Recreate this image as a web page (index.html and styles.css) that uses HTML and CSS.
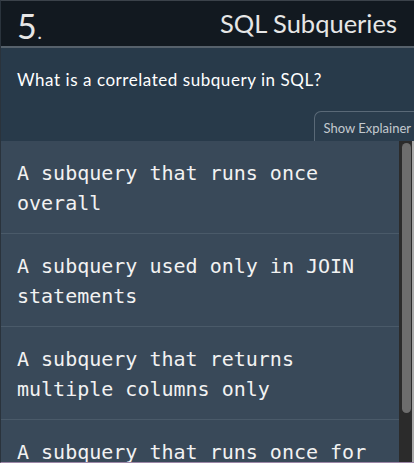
FILE: index.html
```html
<!DOCTYPE html>
<html lang="en">
<head>
<meta charset="utf-8">
<title>SQL Subqueries</title>
<link rel="stylesheet" href="styles.css">
</head>
<body>
<div class="app">
  <header class="topbar">
    <div class="num">5<span class="dot">.</span></div>
    <div class="title">SQL Subqueries</div>
  </header>
  <section class="question">
    <p class="qtext">What is a correlated subquery in SQL?</p>
    <div class="tabrow"><button class="explainer">Show Explainer</button></div>
  </section>
  <div class="listwrap">
    <ul class="answers">
      <li class="answer">A subquery that runs once overall</li>
      <li class="answer">A subquery used only in JOIN statements</li>
      <li class="answer">A subquery that returns multiple columns only</li>
      <li class="answer">A subquery that runs once for each row of the outer query</li>
    </ul>
    <div class="track"><div class="thumb"></div></div>
  </div>
</div>
</body>
</html>
```
FILE: styles.css
```css
* { box-sizing: border-box; }
html, body { margin: 0; padding: 0; }
body {
  width: 414px;
  height: 463px;
  overflow: hidden;
  background: #131a21;
  font-family: Lato, "Open Sans", sans-serif;
}
.app {
  height: 463px;
  display: flex;
  flex-direction: column;
  border-top: 1px solid #3b424a;
  border-left: 1px solid #2a333c;
  border-bottom: 1px solid #9d87a8;
}
.topbar {
  height: 47px;
  flex: none;
  background: #121920;
  border-bottom: 2px solid #56616b;
  display: flex;
  align-items: center;
  justify-content: space-between;
  padding: 0 17px 0 16px;
  color: #e6e6e6;
}
.num {
  font-size: 34px;
  font-weight: 400;
  line-height: 1;
  margin-top: 4px;
}
.dot {
  font-size: 16px;
  font-weight: 700;
  margin-left: 1px;
}
.title {
  font-size: 25.5px;
  font-weight: 400;
  line-height: 1;
  margin-top: 1px;
}
.question {
  flex: none;
  height: 93px;
  background: #283a4a;
  display: flex;
  flex-direction: column;
  justify-content: space-between;
}
.qtext {
  margin: 0;
  padding: 22px 16px 0;
  font-size: 17px;
  line-height: 20px;
  letter-spacing: 0.55px;
  color: #ffffff;
}
.tabrow {
  display: flex;
  justify-content: flex-end;
}
.explainer {
  font-family: Lato, "Open Sans", sans-serif;
  font-size: 13px;
  color: #c3c9cf;
  background: #2b3d4d;
  border: 1px solid #5a6977;
  border-right: none;
  border-bottom: none;
  border-radius: 7px 0 0 0;
  height: 30px;
  padding: 2px 3px 0 8px;
  margin: 0;
  white-space: nowrap;
}
.listwrap {
  flex: 1;
  min-height: 0;
  display: flex;
  background: #394959;
  border-right: 2px solid #a9a9a9;
}
.answers {
  flex: 1;
  min-width: 0;
  margin: 0;
  padding: 0;
  list-style: none;
  overflow: hidden;
}
.track {
  flex: none;
  width: 13px;
  background: #2b2b2b;
  padding: 2px 1px 0 3px;
}
.thumb {
  height: 270px;
  background: #6d6d6d;
  border-radius: 5px;
}
.answer {
  font-family: "DejaVu Sans Mono", monospace;
  font-size: 20px;
  line-height: 30px;
  color: #f2f2f2;
  padding: 17px 12px 15px 16px;
  border-bottom: 1px solid #4a5a69;
}
```
